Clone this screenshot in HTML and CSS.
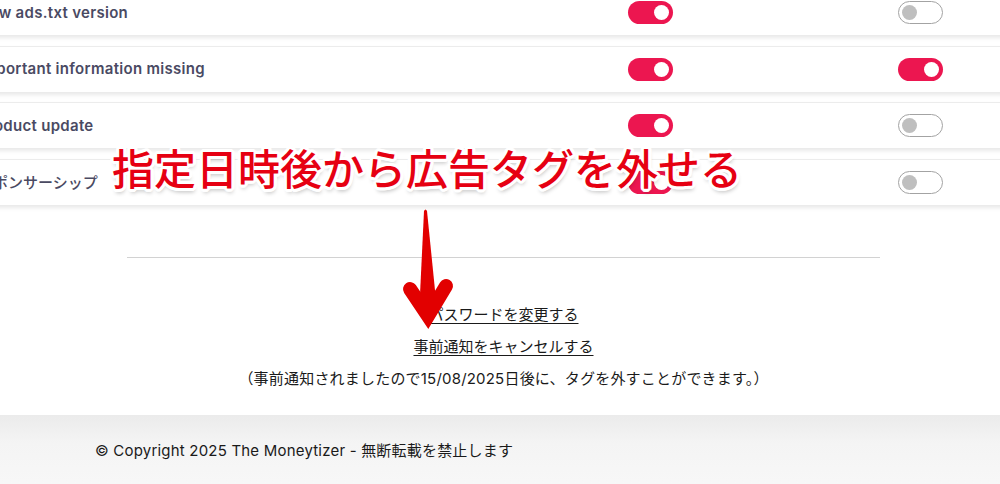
FILE: index.html
```html
<!DOCTYPE html>
<html lang="ja">
<head>
<meta charset="utf-8">
<title>Notifications</title>
<link rel="stylesheet" href="styles.css">
</head>
<body>
<div class="page">
  <main class="settings">
    <div class="rows">
      <div class="row">
        <span class="label">New ads.txt version</span>
        <span class="toggle on"></span>
        <span class="spacer"></span>
        <span class="toggle off"></span>
      </div>
      <div class="row">
        <span class="label">Important information missing</span>
        <span class="toggle on"></span>
        <span class="spacer"></span>
        <span class="toggle on"></span>
      </div>
      <div class="row">
        <span class="label">Product update</span>
        <span class="toggle on"></span>
        <span class="spacer"></span>
        <span class="toggle off"></span>
      </div>
      <div class="row">
        <span class="label label-ja">スポンサーシップ</span>
        <span class="toggle on"></span>
        <span class="spacer"></span>
        <span class="toggle off"></span>
      </div>
    </div>
    <section class="account">
      <hr class="divider">
      <div class="links">
        <a class="link" href="#">パスワードを変更する</a>
        <a class="link" href="#">事前通知をキャンセルする</a>
        <p class="note">（事前通知されましたので15/08/2025日後に、タグを外すことができます。）</p>
      </div>
    </section>
  </main>
  <footer class="footer">
    <p class="copyright">© Copyright 2025 The Moneytizer - 無断転載を禁止します</p>
  </footer>

  <div class="callout">指定日時後から広告タグを外せる</div>
  <svg class="arrow" width="70" height="130" viewBox="0 0 70 130" aria-hidden="true">
    <path d="M29 6 Q30.5 3 32 6 L41.5 100 L24.5 100 Z" fill="#e20000"/>
    <polyline points="15,84 33,111 51,81" fill="none" stroke="#e20000" stroke-width="14" stroke-linecap="round" stroke-linejoin="miter"/>
  </svg>
</div>
</body>
</html>
```

FILE: styles.css
```css
* { box-sizing: border-box; }

html, body {
  margin: 0;
  padding: 0;
  background: #ffffff;
  overflow: hidden;
}

body {
  width: 1000px;
  height: 484px;
  font-family: "Inter", "Noto Sans CJK JP", sans-serif;
  color: #1b1b1b;
}

.page {
  position: relative;
  display: flow-root;
  width: 1000px;
  height: 484px;
}

.settings {
  width: 1000px;
}

.rows {
  display: flex;
  flex-direction: column;
  gap: 10.5px;
  margin-top: -11px;
  margin-left: -22px;
  width: 1042px;
}

.row {
  height: 46px;
  display: grid;
  grid-template-columns: 650px 45px 225px 45px 1fr;
  align-items: center;
  background: #fff;
  border-top: 1px solid #ececec;
  box-shadow: 0 3px 4px rgba(0, 0, 0, 0.09);
}

.label {
  font-family: "Inter", "Noto Sans CJK JP", sans-serif;
  font-weight: 600;
  font-size: 15px;
  letter-spacing: 0.3px;
  color: #4a4a63;
  white-space: nowrap;
  padding-bottom: 1px;
}

.label-ja {
  font-family: "Noto Sans CJK JP", sans-serif;
  font-weight: 500;
  font-size: 15px;
  letter-spacing: 0;
  color: #4a4a62;
  padding-left: 0;
}

.toggle {
  position: relative;
  width: 45px;
  height: 23px;
  border-radius: 12px;
}

.toggle::after {
  content: "";
  position: absolute;
  top: 4px;
  width: 15px;
  height: 15px;
  border-radius: 50%;
}

.toggle.on {
  background: #ec1650;
}

.toggle.on::after {
  right: 4px;
  background: #ffffff;
}

.toggle.off {
  background: #ffffff;
  border: 1px solid #a3a3a3;
}

.toggle.off::after {
  top: 3px;
  left: 3px;
  background: #bfbfbf;
}

.account {
  padding: 52px 120px 0 127px;
}

.divider {
  margin: 0;
  border: 0;
  border-top: 1px solid #d2d2d2;
  height: 0;
}

.links {
  margin-top: 41px;
  display: flex;
  flex-direction: column;
  align-items: center;
  font-family: "Inter", "Noto Sans CJK JP", sans-serif;
  font-size: 15px;
  line-height: 32px;
}

.link {
  color: #1a1a1a;
  text-decoration: underline;
  text-underline-offset: 3px;
  text-decoration-thickness: 1px;
}

.note {
  margin: 0;
  color: #1a1a1a;
  letter-spacing: 0.2px;
}

.footer {
  margin-top: 20px;
  height: 80px;
  background: linear-gradient(#ebebeb 0%, #f4f4f4 35%, #f8f8f8 100%);
  padding: 25px 0 0 95px;
}

.copyright {
  margin: 0;
  font-family: "Inter", "Noto Sans CJK JP", sans-serif;
  font-size: 15px;
  letter-spacing: 0.2px;
  line-height: 22px;
  color: #1a1a1a;
}

.callout {
  position: absolute;
  left: 112px;
  top: 146px;
  font-family: "Noto Sans CJK JP", sans-serif;
  font-weight: 500;
  font-size: 42px;
  line-height: 42px;
  color: #e60012;
  white-space: nowrap;
  text-shadow:
    3px 0 0 #fff, -3px 0 0 #fff, 0 3px 0 #fff, 0 -3px 0 #fff,
    2px 2px 0 #fff, -2px -2px 0 #fff, 2px -2px 0 #fff, -2px 2px 0 #fff,
    1px 3px 0 #fff, -1px 3px 0 #fff, 3px 1px 0 #fff, -3px 1px 0 #fff,
    1px -3px 0 #fff, -1px -3px 0 #fff, 3px -1px 0 #fff, -3px -1px 0 #fff,
    1px 4px 4px rgba(0, 0, 0, 0.28);
}

.arrow {
  position: absolute;
  left: 395px;
  top: 205px;
}
```
